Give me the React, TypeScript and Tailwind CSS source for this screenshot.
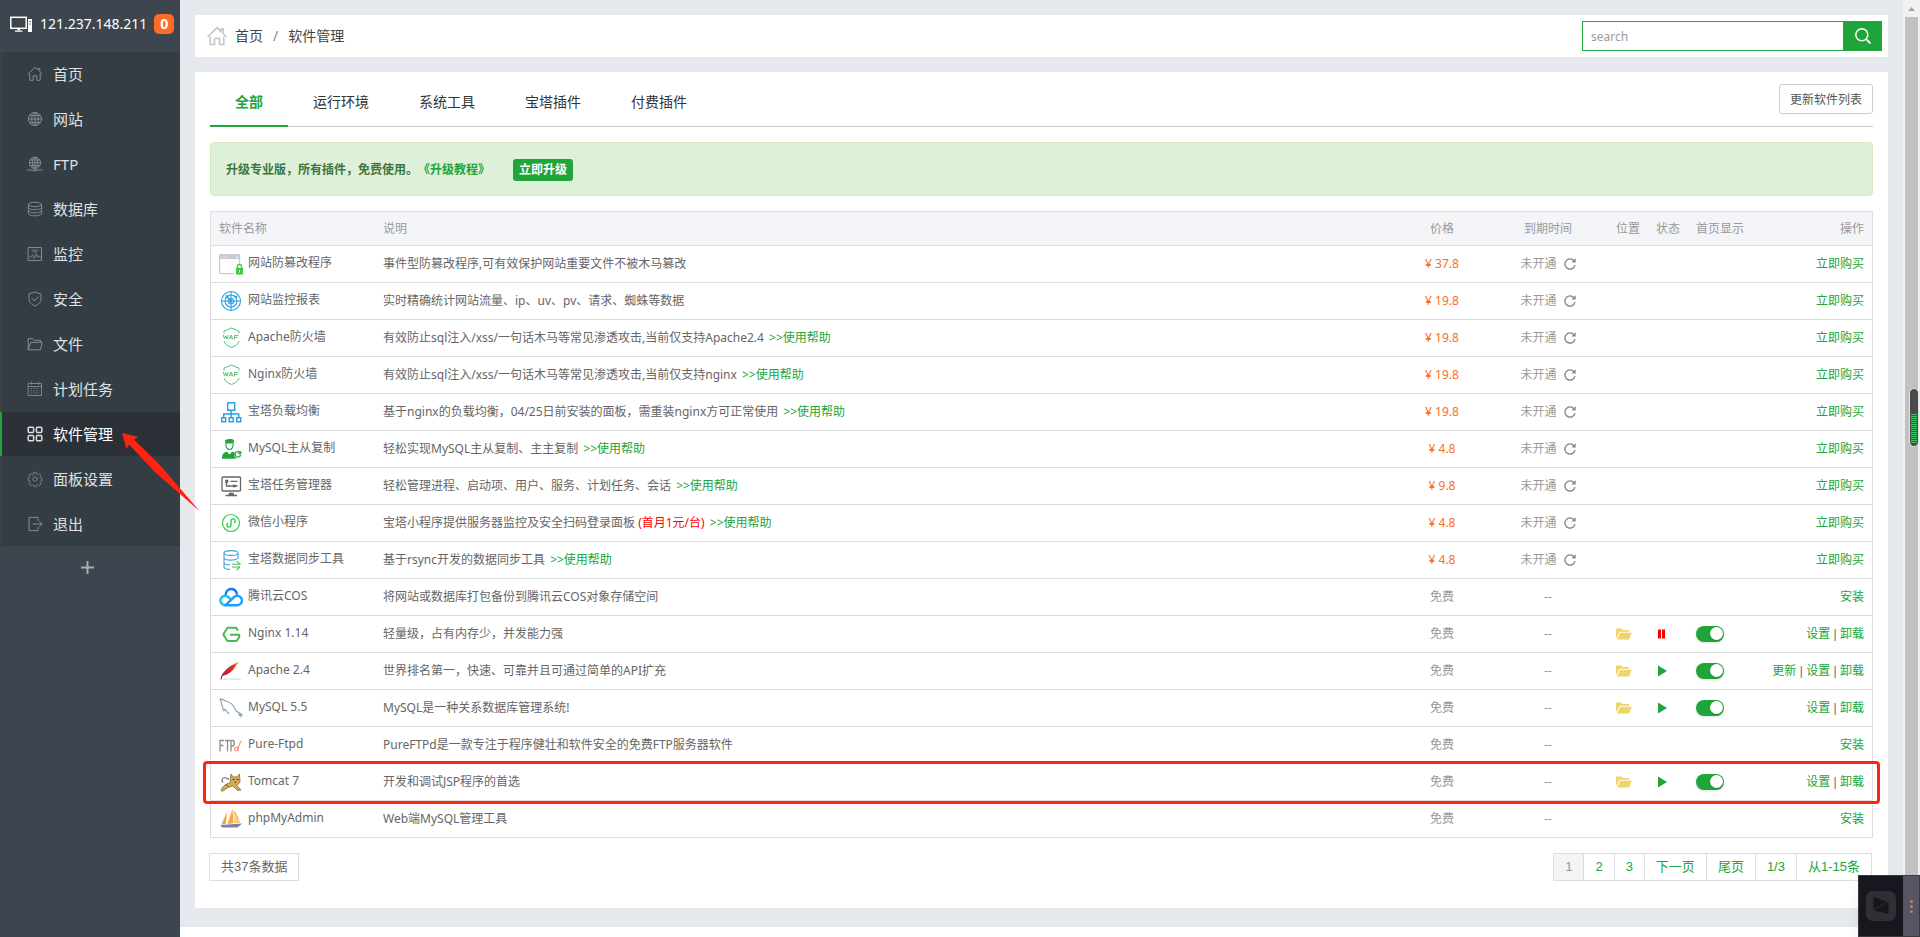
import type { ReactNode } from "react";

/* ---------- sidebar icons ---------- */

const line = {
  fill: "none",
  stroke: "currentColor",
  strokeWidth: 1,
  strokeLinecap: "round" as const,
  strokeLinejoin: "round" as const,
};

function MenuIcon({ name }: { name: string }) {
  const shapes: Record<string, ReactNode> = {
    home: (
      <>
        <path d="M.8 8.2 8 1.3l3 2.9V2.6h1.8v3.3l2.4 2.3" />
        <path d="M2.8 8v6.3h3.4V9.8h3.6v4.5h3.4V8" />
      </>
    ),
    globe: (
      <>
        <circle cx="8" cy="8" r="6.6" />
        <ellipse cx="8" cy="8" rx="3.2" ry="6.6" />
        <path d="M8 1.4v13.2M1.4 8h13.2M2.5 4.6h11M2.5 11.4h11" />
      </>
    ),
    ftp: (
      <>
        <circle cx="8" cy="6.8" r="5.6" />
        <ellipse cx="8" cy="6.8" rx="2.6" ry="5.6" />
        <path d="M8 1.2v11.2M2.4 6.8h11.2M3.2 4h9.6M3.2 9.6h9.6M.5 14h15M6.5 14.8h3" />
      </>
    ),
    db: (
      <>
        <ellipse cx="8" cy="3.4" rx="6.6" ry="2.2" />
        <path d="M1.4 3.4v9.2c0 1.2 3 2.2 6.6 2.2s6.6-1 6.6-2.2V3.4" />
        <path d="M1.4 6.5c0 1.2 3 2.2 6.6 2.2s6.6-1 6.6-2.2M1.4 9.6c0 1.2 3 2.2 6.6 2.2s6.6-1 6.6-2.2" />
      </>
    ),
    monitor: (
      <>
        <path d="M1.5 1.5h13v13h-13z" />
        <path d="M1.8 11h2.4l1.2-2.5 1.6 4 2-5 1.5 4 1-1.8 1.2 1.3h1.6M5 4h6M6 5.8h4" strokeWidth=".8" />
      </>
    ),
    shield: (
      <>
        <path d="M8 1.2 14 3v5c0 3.2-2.6 5.6-6 7-3.4-1.4-6-3.8-6-7V3z" />
        <path d="m5.2 7.6 2.2 2.4 3.8-4.2" />
      </>
    ),
    folder: (
      <>
        <path d="M1.2 13.4V2.6h4.6l1.4 1.8h6.6v2" />
        <path d="M1.2 13.4 3.8 6.4h11.4l-1.6 7z" />
      </>
    ),
    calendar: (
      <>
        <path d="M1.5 2.500h13v12h-13zM1.500 5.500h13M4.500 1v2.500M11.500 1v2.500" strokeWidth=".9" />
        <path d="M3.500 7.500h9M3.500 9.800h9M3.500 12h9" strokeWidth=".7" strokeDasharray="1.600 1.300" strokeLinecap="butt" />
      </>
    ),
    grid: (
      <g strokeWidth="1.5">
        <rect x="1.2" y="1.2" width="5.4" height="5.4" rx="1" />
        <rect x="9.4" y="1.2" width="5.4" height="5.4" rx="1" />
        <rect x="1.2" y="9.4" width="5.4" height="5.4" rx="1" />
        <rect x="9.4" y="9.4" width="5.4" height="5.4" rx="1" />
      </g>
    ),
    gear: (
      <g strokeWidth=".8">
        <circle cx="8" cy="8" r="2.2" />
        <path d="M6.8 1.3h2.4l.4 1.9 1.2.5 1.6-1.1 1.7 1.7-1.1 1.6.5 1.2 1.500.3v2.400l-1.500.4-.5 1.2 1.1 1.6-1.7 1.7-1.6-1.1-1.2.5-.4 1.500H6.8l-.4-1.500-1.2-.5-1.6 1.1-1.7-1.7L3 11l-.5-1.200-1.500-.4V7.100l1.500-.3L3 5.600 1.900 4.300l1.700-1.700 1.6 1.100 1.200-.5z" />
      </g>
    ),
    exit: <path d="M11 4.4V1.4H2v13.2h9v-3M6 8h9M12.4 5.4 15 8l-2.6 2.6" />,
  };
  return (
    <svg viewBox="0 0 16 16" className="size-4 shrink-0" {...line} aria-hidden="true">
      {shapes[name]}
    </svg>
  );
}

/* ---------- software icons ---------- */

function Waf() {
  return (
    <g fill="none" stroke="#5cc07c" strokeWidth="1">
      <path d="M5 7.500V5.200L12.500 2 20 5.200v2.300M5 15c.8 3.200 3.800 5.200 7.500 6.500 3.700-1.300 6.700-3.300 7.500-6.500" />
      <path d="m4.300 9 1.200 4 1.300-3.200L8.100 13l1.200-4M10 13.300l2-4.300 2 4.300M10.800 12h2.400M15.500 13.400V9.400h4M15.500 11.400h3" />
    </g>
  );
}

function AppIcon({ name }: { name: string }) {
  const shapes: Record<string, ReactNode> = {
    tamper: (
      <>
        <rect x=".6" y="2.600" width="20" height="19" rx="1" fill="#fff" stroke="#c9c8d6" strokeWidth="1.200" />
        <path d="M.6 3h20v4H.6z" fill="#c9c8d6" />
        <path d="M2.500 5h1M5 5h1M7.500 5h1M17 5h2" stroke="#fff" />
        <path d="M15 12h9v11h-9z" fill="#fff" />
        <rect x="17" y="16" width="7" height="6.500" fill="#3cc84a" />
        <path d="M18.500 16v-1.600a2 2 0 0 1 4 0V16" fill="none" stroke="#3cc84a" strokeWidth="1.400" />
        <path d="M20.500 18v2.500" stroke="#fff" />
      </>
    ),
    report: (
      <g fill="none" stroke="#2a9fdf" strokeWidth="1.100">
        <circle cx="12" cy="12" r="9.500" />
        <circle cx="12" cy="12" r="6" />
        <circle cx="12" cy="12" r="2.800" />
        <path d="M12 2.500v19M2.500 12h19M7 6l5 6" />
        <circle cx="12" cy="12" r="1" fill="#2a9fdf" />
        <circle cx="8" cy="8" r=".9" fill="#2a9fdf" />
        <circle cx="17" cy="8" r=".9" fill="#2a9fdf" />
      </g>
    ),
    waf: <Waf />,
    balance: (
      <g fill="none" stroke="#2a9fdf" strokeWidth="1.400">
        <path d="M8.700 2.700h7v7.500h-7zM12.200 10v7.500M4.700 17.500V14h15v3.500" />
        <path d="M2.700 17.700h4v4h-4zM10.200 17.700h4v4h-4zM17.700 17.700h4v4h-4z" />
      </g>
    ),
    replica: (
      <>
        <path d="M6 3.200c3-1.600 8-1.600 9 0l-.5 3.300H6.500z" fill="#20a53a" />
        <path d="M6.800 6.500c0 4 1.200 6 3.700 6s3.700-2 3.700-6" fill="none" stroke="#20a53a" strokeWidth="1.200" />
        <path d="M3 21.800c0-4.200 1.500-6.400 5-7l2.500 2.700 2.500-2.700c1.500.2 2.500.8 3 1.500-1.200 2-.4 4 1.500 5.500z" fill="#20a53a" />
        <path d="M20.800 15.300a2.800 2.800 0 1 0 .8 2.600M21.700 14.300v2.200h-2.300" fill="none" stroke="#20a53a" strokeWidth="1.300" />
      </>
    ),
    task: (
      <g fill="none" stroke="#666" strokeWidth="1.300">
        <rect x="3" y="3" width="18.500" height="14" rx="1" />
        <path d="M7.500 7v5h7M11.500 7.300h7M15.500 12h3M6.500 21.500h11.500" />
        <path d="M6.500 6h2.500v2.500H6.500zM14 11h2.500v2H14zM10 19h4.500v2H10z" fill="#666" strokeWidth=".6" />
      </g>
    ),
    wechat: (
      <g fill="none" stroke="#2fcf4c" strokeWidth="1.200">
        <circle cx="12" cy="12" r="8.500" />
        <path d="M8.800 12.200a2.100 2.100 0 1 0 3.200 1.800v-4a2.100 2.100 0 1 1 3.200 1.800" strokeWidth="1.400" />
      </g>
    ),
    sync: (
      <g fill="none" strokeWidth="1.100">
        <g stroke="#3fa3dd">
          <ellipse cx="12" cy="5" rx="7" ry="2.400" />
          <path d="M5 5v14c0 1.300 2.500 2.300 6 2.400M19 5v6M5 9.700c0 1.300 3 2.400 7 2.400 2.500 0 5-.5 6-1.200M5 14.400c0 1.300 2.500 2.300 6 2.400" />
        </g>
        <path d="M13 16.200h8l-3.500-3M21 19h-8M17.500 22l3.500-3" stroke="#4fbb63" />
      </g>
    ),
    cos: (
      <g fill="none" strokeWidth="2.500" strokeLinecap="round">
        <path d="M6.500 10.500C6.700 6.500 9 4 12.200 4c3 0 5 2 5.600 4.600" stroke="#1677ff" />
        <path d="M6.300 20.200a4.700 4.700 0 1 1 3-8.200l2.500 2.300" stroke="#18c8dc" />
        <path d="M6.300 20.200h11.900a4.700 4.700 0 1 0-3.300-8l-8.200 8" stroke="#1ba0ff" />
      </g>
    ),
    nginx: (
      <path d="M19 8.500 17 5.700H8.500L4.300 12.500l4.200 6.500h9l2.700-3.800v-2.400H11" fill="none" stroke="#4ab855" strokeWidth="2" strokeLinejoin="round" />
    ),
    apache: (
      <>
        <defs>
          <linearGradient id="feather" x1="0" y1="1" x2="1" y2="0">
            <stop offset="0" stopColor="#6d2a86" />
            <stop offset=".35" stopColor="#c8202f" />
            <stop offset=".7" stopColor="#e0342c" />
            <stop offset="1" stopColor="#f7a823" />
          </linearGradient>
        </defs>
        <path d="M4 20.800c5-1.500 12-1 18-.5" stroke="#dddddd" strokeWidth="1.200" fill="none" />
        <path d="M1.500 20.500c.5-6 6.500-13 19-18-4 3-4.500 8-10 11.500-3 2-5.500 2.500-7 3l-1 3.500z" fill="url(#feather)" />
      </>
    ),
    mysql: (
      <path d="M.8 2.800c2.500.2 4 1 5.500 2.200 4.500.5 8.500 4 10.700 9.500.6 1.300 2 1.600 3.500 2.300l2.500 2-3-.3 2.500 2.700M.8 2.800C2.500 5 2 7 3 9.200c1 2 .6 3.800 1.600 5.200.8 1 1.200-1.500 1.600-1.200 1 1.800 2.300 3.800 4.300 4.600" fill="none" stroke="#7d9fb3" strokeWidth="1.100" />
    ),
    ftp: (
      <>
        <path d="M1 18.500V7.500h4M1 12.500h3.500M6 7.500h5M8.500 7.500v11M12 18.500V7.500h1.500c2.500 0 2.500 5.500 0 5.500H12" fill="none" stroke="#8d8d8d" strokeWidth="1.300" />
        <path d="M22.500 7.500c-2 2.500-3 5-3.500 10.500M19 14.500c-1.500-1-3.500.5-3.500 2s2.500 2 3.500-1" fill="none" stroke="#f08a8a" strokeWidth="1.100" />
      </>
    ),
    tomcat: (
      <>
        <path d="M2 20.500c1.500-4 4-6.500 9-7.500l1-9 2.200 3h3.600L20.500 4l.5 8c-1 2-2.500 2.700-3.500 3.200l4.500 4.800-3.200.5-5-4.500-4.800 1.500-5.500 3.800z" fill="#d9ad55" stroke="#6b5a35" strokeWidth=".7" />
        <path d="M4 12.500C2 10.500 3 7.800 6 7.800c2 0 3 .7 4 1.700" fill="none" stroke="#666" strokeWidth="1.100" />
        <path d="M13.500 9.500h2M17.500 9.500h2M15.500 12.200h2" stroke="#3d3520" />
        <path d="M7 14.500l2 2" stroke="#3d3520" />
      </>
    ),
    phpmyadmin: (
      <>
        <path d="M8 4.500 2.500 17.500l4.500-.7zM13.500 2C11.500 8 10 13 8.500 17l6-.8zM14.800 3c3 4 5 8 6 12.500l-5.500.8z" fill="#f5a63c" />
        <path d="m14.500 3 .5 13 5.500-1z" fill="#f9cd8b" />
        <path d="M1.500 18 23 16.500l-4.500 4H3z" fill="#7d80ac" />
      </>
    ),
  };
  return (
    <svg viewBox="0 0 24 24" className="size-6 shrink-0" aria-hidden="true">
      {shapes[name]}
    </svg>
  );
}

function Refresh() {
  return (
    <svg viewBox="0 0 12 12" className="size-3" aria-hidden="true">
      <path d="M10 2.800A5.100 5.100 0 1 0 11 7.200" fill="none" stroke="#888" strokeWidth="1.400" />
      <path d="M11.700.3v4.300H7.400z" fill="#888" />
    </svg>
  );
}

function FolderOpen() {
  return (
    <svg viewBox="0 0 16 12" className="h-3 w-4" aria-hidden="true" fill="#efd468">
      <path d="M0 10.500V1.500C0 .8.400.500 1 .500h4.500l1 1.500h5.800c.6 0 .9.300.9 1v.800H3.500z" />
      <path d="M4.200 4.700H15.800L13 11.500H1z" />
    </svg>
  );
}

/* ---------- data ---------- */

const menu = [
  ["home", "首页"],
  ["globe", "网站"],
  ["ftp", "FTP"],
  ["db", "数据库"],
  ["monitor", "监控"],
  ["shield", "安全"],
  ["folder", "文件"],
  ["calendar", "计划任务"],
  ["grid", "软件管理"],
  ["gear", "面板设置"],
  ["exit", "退出"],
];

const tabs = ["全部", "运行环境", "系统工具", "宝塔插件", "付费插件"];

interface Software {
  icon: string;
  name: string;
  desc: string;
  promo?: string;
  help?: boolean;
  price?: string;
  status?: "running" | "paused";
  actions: string[];
  marked?: boolean;
}

const software: Software[] = [
  { icon: "tamper", name: "网站防篡改程序", desc: "事件型防篡改程序,可有效保护网站重要文件不被木马篡改", price: "37.8", actions: ["立即购买"] },
  { icon: "report", name: "网站监控报表", desc: "实时精确统计网站流量、ip、uv、pv、请求、蜘蛛等数据", price: "19.8", actions: ["立即购买"] },
  { icon: "waf", name: "Apache防火墙", desc: "有效防止sql注入/xss/一句话木马等常见渗透攻击,当前仅支持Apache2.4", help: true, price: "19.8", actions: ["立即购买"] },
  { icon: "waf", name: "Nginx防火墙", desc: "有效防止sql注入/xss/一句话木马等常见渗透攻击,当前仅支持nginx", help: true, price: "19.8", actions: ["立即购买"] },
  { icon: "balance", name: "宝塔负载均衡", desc: "基于nginx的负载均衡，04/25日前安装的面板，需重装nginx方可正常使用", help: true, price: "19.8", actions: ["立即购买"] },
  { icon: "replica", name: "MySQL主从复制", desc: "轻松实现MySQL主从复制、主主复制", help: true, price: "4.8", actions: ["立即购买"] },
  { icon: "task", name: "宝塔任务管理器", desc: "轻松管理进程、启动项、用户、服务、计划任务、会话", help: true, price: "9.8", actions: ["立即购买"] },
  { icon: "wechat", name: "微信小程序", desc: "宝塔小程序提供服务器监控及安全扫码登录面板", promo: "(首月1元/台)", help: true, price: "4.8", actions: ["立即购买"] },
  { icon: "sync", name: "宝塔数据同步工具", desc: "基于rsync开发的数据同步工具", help: true, price: "4.8", actions: ["立即购买"] },
  { icon: "cos", name: "腾讯云COS", desc: "将网站或数据库打包备份到腾讯云COS对象存储空间", actions: ["安装"] },
  { icon: "nginx", name: "Nginx 1.14", desc: "轻量级，占有内存少，并发能力强", status: "paused", actions: ["设置", "卸载"] },
  { icon: "apache", name: "Apache 2.4", desc: "世界排名第一，快速、可靠并且可通过简单的API扩充", status: "running", actions: ["更新", "设置", "卸载"] },
  { icon: "mysql", name: "MySQL 5.5", desc: "MySQL是一种关系数据库管理系统!", status: "running", actions: ["设置", "卸载"] },
  { icon: "ftp", name: "Pure-Ftpd", desc: "PureFTPd是一款专注于程序健壮和软件安全的免费FTP服务器软件", actions: ["安装"] },
  { icon: "tomcat", name: "Tomcat 7", desc: "开发和调试JSP程序的首选", status: "running", actions: ["设置", "卸载"], marked: true },
  { icon: "phpmyadmin", name: "phpMyAdmin", desc: "Web端MySQL管理工具", actions: ["安装"] },
];

/* ---------- page parts ---------- */

function Sidebar() {
  return (
    <aside className="relative z-10 w-[180px] shrink-0 bg-[#3d454e] text-[#dfe1e3]">
      <div className="flex h-[52px] items-center pb-1 pl-[10px] text-sm text-white">
        <svg viewBox="0 0 23 17" className="mr-[7px] h-[17px] w-[23px]" fill="none" stroke="#fff" aria-hidden="true">
          <rect x=".8" y="1.300" width="15.400" height="11" strokeWidth="1.500" />
          <path d="M5 15.200h7.500M7.500 13.500h2.500" strokeWidth="1.300" />
          <rect x="18" y="3" width="4" height="13" fill="#fff" stroke="none" />
          <path d="M19.300 5.500h1.400M19.300 8h1.400" stroke="#3d454e" />
        </svg>
        121.237.148.211
        <span className="ml-[7px] flex size-5 items-center justify-center rounded-[5px] bg-[#ff6c25] font-bold leading-none">0</span>
      </div>
      <nav className="bg-[#353d44]">
        {menu.map(([icon, label]) => {
          const active = icon === "grid";
          return (
            <a
              key={icon}
              href="#"
              className={
                active
                  ? "relative mb-px flex h-11 items-center gap-[10px] border-l-2 border-[#20a53a] bg-[#2c3137] pl-[25px] text-[15px] text-white"
                  : "mb-px flex h-11 items-center gap-[10px] border-l-2 border-[#423f3e] pl-[25px] text-[15px]"
              }
            >
              <span className={active ? "text-[#dddddd]" : "text-[#868b8f]"}>
                <MenuIcon name={icon} />
              </span>
              {label}
              {active && (
                <svg viewBox="0 0 80 80" className="absolute left-[119px] top-5 size-20" aria-hidden="true">
                  <path d="M1 1 17.500 5 13 7.500 38 32 79 79.500 35 41 8 12.500 5.500 17z" fill="#ff2312" />
                </svg>
              )}
            </a>
          );
        })}
      </nav>
      <button type="button" aria-label="添加" className="mx-auto block h-10 pr-[6px]">
        <svg viewBox="0 0 13 13" className="size-[13px]" aria-hidden="true">
          <path d="M6.500 0v13M0 6.500h13" stroke="#a9adb1" strokeWidth="2" />
        </svg>
      </button>
    </aside>
  );
}

function TopBar() {
  return (
    <header className="flex h-[42px] items-center bg-white pl-3 pr-[6px]">
      <svg viewBox="0 0 20 20" className="mr-2 size-5" fill="none" stroke="#c4c4c4" strokeWidth="1.500" aria-hidden="true">
        <path d="M.6 11 10 1.600l4 4V3h2.300v4.800l3.200 3.200" />
        <path d="M3.200 10.500v8h4.300v-6h5v6h4.300v-8" />
      </svg>
      <a href="#" className="text-sm text-[#444]">首页</a>
      <span className="mx-[10px] text-sm text-[#888]">/</span>
      <span className="text-sm text-[#444]">软件管理</span>
      <form className="ml-auto flex h-[30px] w-[300px]">
        <input
          type="search"
          aria-label="search"
          placeholder="search"
          className="min-w-0 flex-1 border border-[#20a53a] bg-white px-2 pt-0.5 text-xs text-[#555] placeholder:text-[#999]"
        />
        <button type="button" aria-label="搜索" className="flex w-[38px] items-center justify-center bg-[#20a53a]">
          <svg viewBox="0 0 16 16" className="size-4" fill="none" stroke="#fff" strokeWidth="1.500" aria-hidden="true">
            <circle cx="6.800" cy="6.800" r="6" />
            <path d="m11.200 11.200 4.300 4.300" strokeWidth="1.800" />
          </svg>
        </button>
      </form>
    </header>
  );
}

function SoftwareRow({ item }: { item: Software }) {
  const cell = "border-b border-[#dddddd] px-2";
  const controlCell = "border-b border-[#dddddd] px-2 pb-px";
  return (
    <tr className="relative h-[37px]">
      <td className={cell}>
        <div className="flex items-center gap-[5px]">
          <AppIcon name={item.icon} />
          <span className="whitespace-nowrap pb-[3px]">{item.name}</span>
        </div>
        {item.marked && (
          <span className="pointer-events-none absolute -bottom-[3px] -left-2 -right-2 -top-[3px] rounded-[4px] border-[3px] border-[#ff2312]" />
        )}
      </td>
      <td className={cell}>
        {item.desc}
        {item.promo && <span className="text-[#ff0000]"> {item.promo}</span>}
        {item.help && (
          <>
            {" "}
            <a href="#" className="ml-0.5 text-[#20a53a]">&gt;&gt;使用帮助</a>
          </>
        )}
      </td>
      <td className="border-b border-[#dddddd] px-2 text-center">
        {item.price ? <span className="text-[#fc6d26]">¥ {item.price}</span> : <span className="text-[#999]">免费</span>}
      </td>
      <td className="border-b border-[#dddddd] px-2 text-[#999]">
        {item.price ? (
          <div className="flex items-center justify-center gap-[7px]">
            未开通
            <button type="button" aria-label="刷新" className="pb-px">
              <Refresh />
            </button>
          </div>
        ) : (
          <div className="text-center">--</div>
        )}
      </td>
      <td className={controlCell}>
        {item.status && (
          <button type="button" aria-label="打开目录" className="block">
            <FolderOpen />
          </button>
        )}
      </td>
      <td className={controlCell}>
        {item.status && (
          <button type="button" aria-label="切换状态" className="block">
            <svg viewBox="0 0 12 12" className="size-3" aria-hidden="true">
              {item.status === "running" ? (
                <path d="M2 .5 11 6l-9 5.500z" fill="#20a53a" />
              ) : (
                <path d="M2 1.500h3v9H2zM6 1.500h3v9H6z" fill="#ff0000" />
              )}
            </svg>
          </button>
        )}
      </td>
      <td className={controlCell}>
        {item.status && (
          <label className="relative flex w-7">
            <input type="checkbox" defaultChecked aria-label={`${item.name} 首页显示`} className="peer sr-only" />
            <span className="flex h-4 w-7 items-center rounded-full bg-[#bbb] p-px shadow-sm peer-checked:justify-end peer-checked:bg-[#20a53a]">
              <span className="size-[13px] rounded-full bg-white shadow" />
            </span>
          </label>
        )}
      </td>
      <td className="whitespace-nowrap border-b border-[#dddddd] px-2 text-right">
        {item.actions.map((action, i) => (
          <span key={action}>
            {i > 0 && <span className="font-['Liberation_Sans',sans-serif]"> | </span>}
            <a href="#" className="text-[#20a53a]">{action}</a>
          </span>
        ))}
      </td>
    </tr>
  );
}

function SoftwareTable() {
  const head = "border-b border-[#dddddd] px-2 font-normal whitespace-nowrap";
  return (
    <div className="mt-[15px] border-x border-t border-[#dddddd]">
      <table className="w-full table-fixed border-separate border-spacing-0 text-xs text-[#666]">
        <colgroup>
          <col className="w-[164px]" />
          <col />
          <col className="w-[92px]" />
          <col className="w-[120px]" />
          <col className="w-10" />
          <col className="w-10" />
          <col className="w-16" />
          <col className="w-[120px]" />
        </colgroup>
        <thead>
          <tr className="h-[34px] bg-[#f4f5f9] text-left text-[#999]">
            <th className={head}>软件名称</th>
            <th className={head}>说明</th>
            <th className="whitespace-nowrap border-b border-[#dddddd] px-2 text-center font-normal">价格</th>
            <th className="whitespace-nowrap border-b border-[#dddddd] px-2 text-center font-normal">到期时间</th>
            <th className={head}>位置</th>
            <th className={head}>状态</th>
            <th className={head}>首页显示</th>
            <th className="whitespace-nowrap border-b border-[#dddddd] px-2 text-right font-normal">操作</th>
          </tr>
        </thead>
        <tbody>
          {software.map((item) => (
            <SoftwareRow key={item.name} item={item} />
          ))}
        </tbody>
      </table>
    </div>
  );
}

function Pager() {
  return (
    <div className="-ml-px mr-px mt-[15px] flex h-7 items-stretch justify-between font-['Liberation_Sans','Noto_Sans_CJK_SC',sans-serif] text-[13px] text-[#666]">
      <span className="flex items-center border border-[#dddddd] px-[11px]">共37条数据</span>
      <nav className="flex divide-x divide-[#dddddd] border border-[#dddddd] text-[#20a53a]">
        <span className="flex items-center bg-[#f4f4f4] px-[11px] text-[#999]">1</span>
        {["2", "3", "下一页", "尾页"].map((label) => (
          <a key={label} href="#" className="flex items-center px-[11px]">{label}</a>
        ))}
        <span className="flex items-center px-[11px]">1/3</span>
        <span className="flex items-center px-[11px]">从1-15条</span>
      </nav>
    </div>
  );
}

function ScrollTrack() {
  return (
    <div className="relative flex w-[17px] shrink-0 flex-col items-center bg-[#f1f1f1]" aria-hidden="true">
      <svg viewBox="0 0 17 17" className="size-[17px] shrink-0">
        <path d="M5 11 8.500 7l3.500 4z" fill="#a3a3a3" />
      </svg>
      <div className="w-[13px] flex-1 bg-[#c1c1c1]" />
      <div className="absolute right-px top-[388px] flex h-[59px] w-[10px] flex-col justify-end rounded-full border border-[#e4e4e4] bg-[#4a4a4a] px-px pb-[3px]">
        <div className="h-[29px] bg-[repeating-linear-gradient(to_bottom,#42c368_0_1px,#4a4a4a_1px_2px)]" />
      </div>
    </div>
  );
}

function RecorderWidget() {
  return (
    <div className="fixed bottom-0 right-0 z-20 flex h-[62px] w-[62px] border border-[#3b3b3f] shadow-lg">
      <div className="flex flex-1 items-center justify-center bg-[#17181f]">
        <svg viewBox="0 0 30 30" className="size-[30px]" aria-hidden="true">
          <rect width="30" height="30" rx="7" fill="#2f3035" />
          <path d="M7.500 6v12.500L15 14.500l8-3zM22.500 23V11L15 15l-7.500 4z" fill="#15161b" />
          <path d="m7.500 19 15-8.500" stroke="#2f3035" />
        </svg>
      </div>
      <div className="flex w-4 flex-col items-center justify-center gap-[2px] bg-[#555564]">
        <span className="size-[3px] rounded-full bg-[#bf7c66]" />
        <span className="size-[3px] rounded-full bg-[#bf7c66]" />
        <span className="size-[3px] rounded-full bg-[#bf7c66]" />
      </div>
    </div>
  );
}

export default function App() {
  return (
    <div className="flex min-h-screen bg-white font-['Noto_Sans','Noto_Sans_CJK_SC',sans-serif]">
      <Sidebar />
      <div className="min-w-0 flex-1">
        <main className="bg-[#e5e9ee] px-[15px] pb-[19px] pt-[15px]">
          <TopBar />
          <section className="mt-[15px] bg-white px-[15px] pb-[27px]">
            <div className="flex h-[55px] border-b border-[#cccccc]">
              {tabs.map((tab, i) => (
                <button
                  key={tab}
                  type="button"
                  className={
                    i === 0
                      ? "-mb-px border-b-2 border-[#20a53a] px-[25px] pt-[6px] text-sm font-bold text-[#20a53a]"
                      : "px-[25px] pt-[6px] text-sm text-[#333]"
                  }
                >
                  {tab}
                </button>
              ))}
              <button type="button" className="ml-auto mt-3 h-[30px] rounded-[3px] border border-[#cccccc] px-[10px] pt-0.5 text-xs text-[#555]">
                更新软件列表
              </button>
            </div>
            <div className="mt-[15px] flex h-[54px] items-center rounded border border-[#d6e9c6] bg-[#dff0d8] px-[15px] pt-0.5 text-xs font-bold text-[#3c763d]">
              升级专业版，所有插件，免费使用。
              <a href="#" className="text-[#20a53a]">《升级教程》</a>
              <button type="button" className="ml-[23px] h-[22px] rounded-[3px] bg-[#20a53a] px-[6px] text-white">立即升级</button>
            </div>
            <SoftwareTable />
            <Pager />
          </section>
        </main>
      </div>
      <ScrollTrack />
      <RecorderWidget />
    </div>
  );
}
